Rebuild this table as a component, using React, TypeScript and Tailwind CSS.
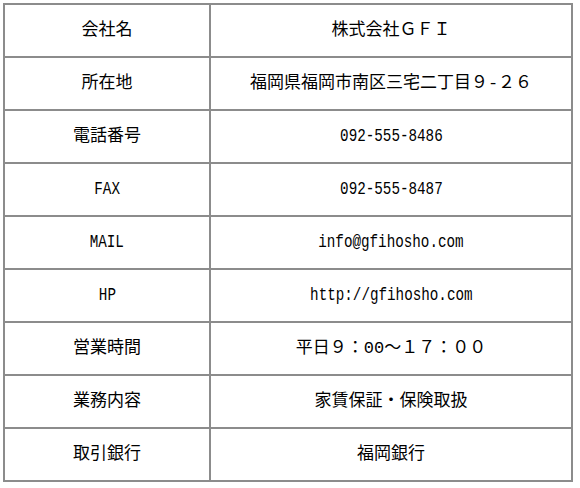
import React from 'react';

const rows = [
  { label: '会社名', value: '株式会社ＧＦＩ' },
  { label: '所在地', value: '福岡県福岡市南区三宅二丁目９-２６' },
  { label: '電話番号', value: '092-555-8486', ascii: true },
  { label: 'FAX', value: '092-555-8487', ascii: true, labelAscii: true },
  { label: 'MAIL', value: 'info@gfihosho.com', ascii: true, labelAscii: true },
  { label: 'HP', value: 'http://gfihosho.com', ascii: true, labelAscii: true },
  { label: '営業時間', value: '平日９：00～１７：００' },
  { label: '業務内容', value: '家賃保証・保険取扱' },
  { label: '取引銀行', value: '福岡銀行' },
];

// half-width text in the original is a narrow, tall gothic; squeeze the mono font to match
function Narrow({ children }: { children: React.ReactNode }) {
  return <span className="inline-block text-[19px] scale-x-[0.75]">{children}</span>;
}

export default function App() {
  return (
    <div className="w-[580px] h-[488px] bg-white pt-[3px] pl-[3px] font-['Liberation_Mono','Noto_Sans_CJK_JP',monospace] text-[17px] text-black">
      <div className="grid grid-cols-[206px_362px] w-[570px] border-l-2 border-t-2 border-[#8c8c8c]">
        {rows.map((row) => (
          <React.Fragment key={row.label}>
            <div className="h-[53px] flex items-center justify-center border-r-2 border-b-2 border-[#8c8c8c]">
              {row.labelAscii ? <Narrow>{row.label}</Narrow> : row.label}
            </div>
            <div className="h-[53px] flex items-center justify-center border-r-2 border-b-2 border-[#8c8c8c]">
              {row.ascii ? <Narrow>{row.value}</Narrow> : row.value}
            </div>
          </React.Fragment>
        ))}
      </div>
    </div>
  );
}
